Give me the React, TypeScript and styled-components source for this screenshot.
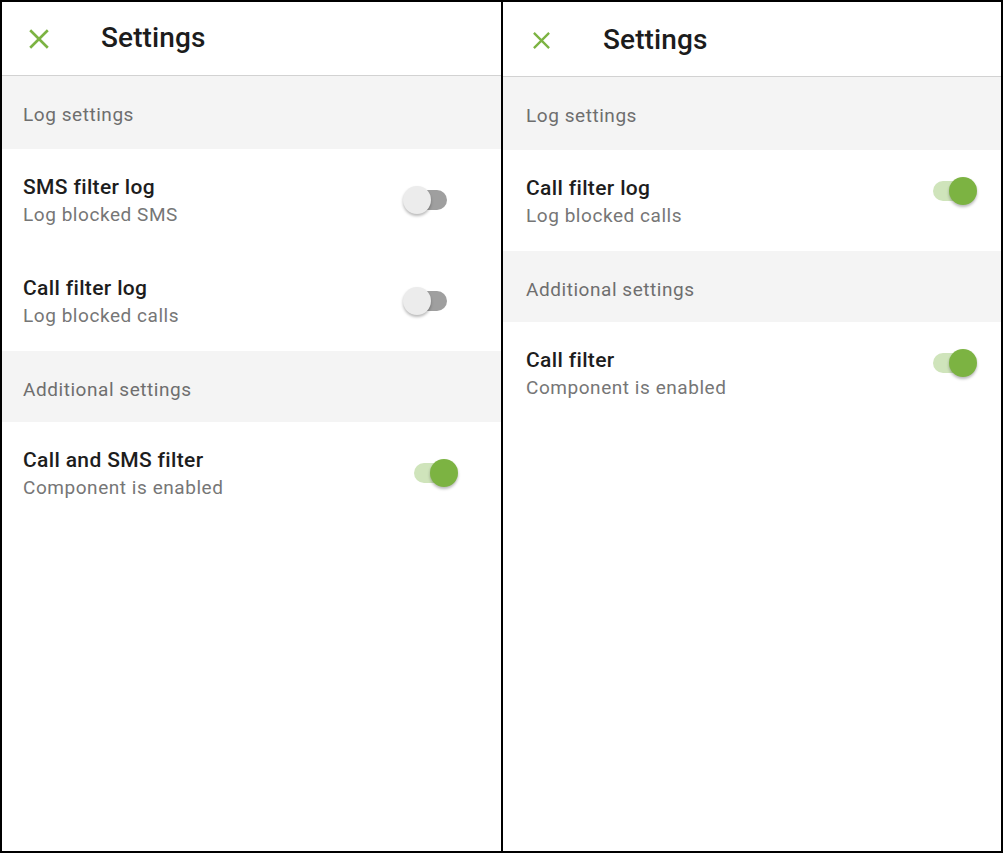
import React from "react";
import styled, { createGlobalStyle } from "styled-components";

const Global = createGlobalStyle`
  html, body { margin: 0; padding: 0; background: #fff; }
  body { font-family: Roboto, "Noto Sans", "Liberation Sans", sans-serif; }
  * { box-sizing: border-box; }
`;

const Frame = styled.div`
  width: 1003px;
  height: 853px;
  border: 2px solid #000;
  display: flex;
  background: #fff;
`;

const Panel = styled.div<{ $divider?: boolean }>`
  flex: 0 0 ${(p) => (p.$divider ? "500px" : "499px")};
  display: flex;
  flex-direction: column;
  border-left: ${(p) => (p.$divider ? "2px solid #000" : "none")};
  overflow: hidden;
`;

const Header = styled.div<{ $h: number; $iconPad: number }>`
  height: ${(p) => p.$h}px;
  border-bottom: 1px solid #d2d2d2;
  display: flex;
  align-items: flex-start;
  padding-left: ${(p) => p.$iconPad}px;
`;

const HeaderInner = styled.div`
  position: relative;
  display: flex;
  width: 100%;
`;

const CloseBtn = styled.div<{ $size: number; $top: number }>`
  width: ${(p) => p.$size}px;
  height: ${(p) => p.$size}px;
  margin-top: ${(p) => p.$top}px;
  display: flex;
  svg { display: block; }
`;

const Title = styled.h1<{ $left: number; $top: number }>`
  margin: 0;
  position: absolute;
  font-size: 28px;
  line-height: 34px;
  font-weight: 500;
  color: #1c1c1c;
  padding-top: ${(p) => p.$top}px;
  padding-left: ${(p) => p.$left}px;
  letter-spacing: 0.1px;
`;

const Section = styled.div<{ $h: number; $padLeft: number }>`
  height: ${(p) => p.$h}px;
  background: #f4f4f4;
  padding: 25px 0 0 ${(p) => p.$padLeft}px;
  font-size: 19px;
  line-height: 28px;
  color: #6e6e6e;
  letter-spacing: 0.55px;
`;

const Row = styled.div<{ $padRight: number; $padLeft: number; $top?: boolean }>`
  height: 101px;
  display: flex;
  align-items: ${(p) => (p.$top ? "flex-start" : "center")};
  justify-content: space-between;
  padding: 0 ${(p) => p.$padRight}px 0 ${(p) => p.$padLeft}px;
`;

const TextBlock = styled.div`
  display: flex;
  flex-direction: column;
  align-self: flex-start;
  padding-top: 24px;
`;

const RowTitle = styled.div`
  font-size: 21px;
  line-height: 28px;
  font-weight: 500;
  color: #1d1d1d;
  letter-spacing: 0.35px;
`;

const RowSub = styled.div`
  font-size: 19px;
  line-height: 28px;
  color: #767676;
  letter-spacing: 0.55px;
`;

const SwitchBox = styled.div<{ $mt?: number }>`
  position: relative;
  width: 55px;
  height: 28px;
  flex: 0 0 auto;
  margin-top: ${(p) => (p.$mt ? `${p.$mt}px` : "0")};
`;

const Track = styled.div<{ $on: boolean }>`
  position: absolute;
  top: 4px;
  left: ${(p) => (p.$on ? "11px" : "6px")};
  width: 38px;
  height: 20px;
  border-radius: 10px;
  background: ${(p) => (p.$on ? "#cfe4bb" : "#9f9f9f")};
`;

const Thumb = styled.div<{ $on: boolean }>`
  position: absolute;
  top: 0;
  left: ${(p) => (p.$on ? "27px" : "0")};
  width: 28px;
  height: 28px;
  border-radius: 50%;
  background: ${(p) => (p.$on ? "#7cb342" : "#ececec")};
  box-shadow: 0 2px 3px rgba(0, 0, 0, 0.28);
`;

const Switch = ({ on, mt }: { on: boolean; mt?: number }) => (
  <SwitchBox $mt={mt}>
    <Track $on={on} />
    <Thumb $on={on} />
  </SwitchBox>
);

const XIcon = ({ size }: { size: number }) => (
  <svg width={size} height={size} viewBox="0 0 20 20">
    <path d="M2 2 L18 18 M18 2 L2 18" stroke="#7cb342" strokeWidth="2.4" strokeLinecap="butt" />
  </svg>
);

type Item =
  | { kind: "section"; label: string; h: number }
  | { kind: "row"; title: string; sub: string; on: boolean };

const leftItems: Item[] = [
  { kind: "section", label: "Log settings", h: 73 },
  { kind: "row", title: "SMS filter log", sub: "Log blocked SMS", on: false },
  { kind: "row", title: "Call filter log", sub: "Log blocked calls", on: false },
  { kind: "section", label: "Additional settings", h: 71 },
  { kind: "row", title: "Call and SMS filter", sub: "Component is enabled", on: true },
];

const rightItems: Item[] = [
  { kind: "section", label: "Log settings", h: 73 },
  { kind: "row", title: "Call filter log", sub: "Log blocked calls", on: true },
  { kind: "section", label: "Additional settings", h: 71 },
  { kind: "row", title: "Call filter", sub: "Component is enabled", on: true },
];

const SettingsPanel = ({
  items,
  divider,
  right,
}: {
  items: Item[];
  divider?: boolean;
  right?: boolean;
}) => {
  const padLeft = right ? 23 : 21;
  return (
    <Panel $divider={divider}>
      <Header $h={right ? 75 : 74} $iconPad={right ? 29 : 26}>
        <HeaderInner>
          <CloseBtn $size={right ? 19 : 22} $top={right ? 29 : 26}>
            <XIcon size={right ? 19 : 22} />
          </CloseBtn>
          <Title $left={right ? 71 : 73} $top={right ? 21 : 19}>
            Settings
          </Title>
        </HeaderInner>
      </Header>
      {items.map((it, i) =>
        it.kind === "section" ? (
          <Section key={i} $h={it.h} $padLeft={padLeft}>
            {it.label}
          </Section>
        ) : (
          <Row key={i} $padRight={right ? 24 : 43} $padLeft={padLeft} $top={right}>
            <TextBlock>
              <RowTitle>{it.title}</RowTitle>
              <RowSub>{it.sub}</RowSub>
            </TextBlock>
            <Switch on={it.on} mt={right ? 27 : undefined} />
          </Row>
        )
      )}
    </Panel>
  );
};

export default function App() {
  return (
    <>
      <Global />
      <Frame>
        <SettingsPanel items={leftItems} />
        <SettingsPanel items={rightItems} divider right />
      </Frame>
    </>
  );
}
